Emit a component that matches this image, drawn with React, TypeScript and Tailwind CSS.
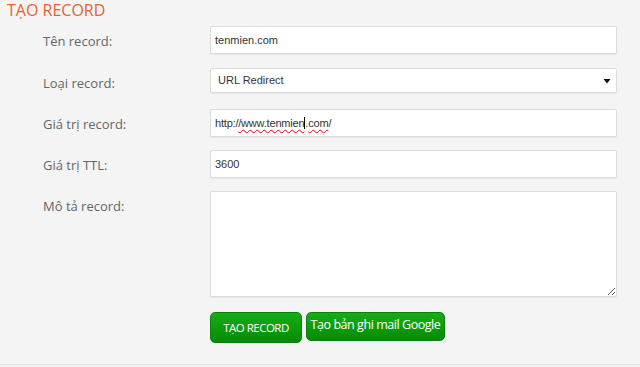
import React from "react";

const labelCls = "w-[210px] shrink-0 pl-[43px] pt-[6px] text-[13px] leading-[18px] text-[#666]";
const boxCls =
  "w-[407px] border border-[#dcdcdc] bg-white shadow-[0_1px_1px_rgba(0,0,0,0.06)] font-['Liberation_Sans',Arial,sans-serif] text-[11px] text-[#333]";

function Row({ label, className, children }: { label: string; className?: string; children: React.ReactNode }) {
  return (
    <div className={"flex items-start " + (className ?? "")}>
      <label className={labelCls}>{label}</label>
      {children}
    </div>
  );
}

export default function App() {
  return (
    <div className="flex h-[367px] w-[640px] flex-col overflow-hidden bg-[#f4f4f4] font-['Open_Sans',sans-serif]">
      <h2 className="pl-[7px] text-[16px] leading-[20px] text-[#e8622d]">TẠO RECORD</h2>

      <form className="flex flex-col">
        <Row label="Tên record:" className="mt-[6px]">
          <div className={boxCls + " flex h-[28px] items-center rounded-[2px] pl-[4px]"}>tenmien.com</div>
        </Row>

        <Row label="Loại record:" className="mt-[14px]">
          <div className={boxCls + " flex h-[25px] items-center justify-between rounded-[2px] pl-[7px] pr-[5px]"}>
            <span>URL Redirect</span>
            <svg width="8" height="6" viewBox="0 0 8 6">
              <path d="M0.5 1h7L4 5.5z" fill="#111" />
            </svg>
          </div>
        </Row>

        <Row label="Giá trị record:" className="mt-[16px]">
          <div className={boxCls + " flex h-[28px] items-center rounded-[2px] border-[#9fb8e2] pl-[4px] tracking-[-0.2px]"}>
            <span>http:/</span>
            <span className="underline decoration-red-600 decoration-wavy decoration-[1px] underline-offset-2">/www.tenmien</span>
            <span className="inline-block h-[12px] w-px bg-black" />
            <span>.</span>
            <span className="underline decoration-red-600 decoration-wavy decoration-[1px] underline-offset-2">com</span>
            <span>/</span>
          </div>
        </Row>

        <Row label="Giá trị TTL:" className="mt-[13px]">
          <div className={boxCls + " flex h-[28px] items-center rounded-[2px] pl-[4px]"}>3600</div>
        </Row>

        <Row label="Mô tả record:" className="mt-[13px]">
          <textarea className={boxCls + " h-[106px] rounded-[2px] outline-none"} />
        </Row>

        <div className="ml-[210px] mt-[15px] flex items-start gap-[4px]">
          <button
            type="button"
            className="h-[31px] w-[92px] whitespace-nowrap rounded-[5px] border border-[#0a7f0a] bg-gradient-to-b from-[#16ad16] to-[#078a07] text-[11.5px] tracking-[-0.5px] text-white"
          >
            TẠO RECORD
          </button>
          <button
            type="button"
            className="h-[29px] w-[139px] whitespace-nowrap rounded-[5px] border border-[#0a7f0a] bg-gradient-to-b from-[#16ad16] to-[#078a07] pb-[3px] text-[12.5px] tracking-[-0.45px] text-white"
          >
            Tạo bản ghi mail Google
          </button>
        </div>
      </form>

      <div className="mt-auto h-[3px] border-t border-[#e4e4e4] bg-[#f0f0f0]" />
    </div>
  );
}
